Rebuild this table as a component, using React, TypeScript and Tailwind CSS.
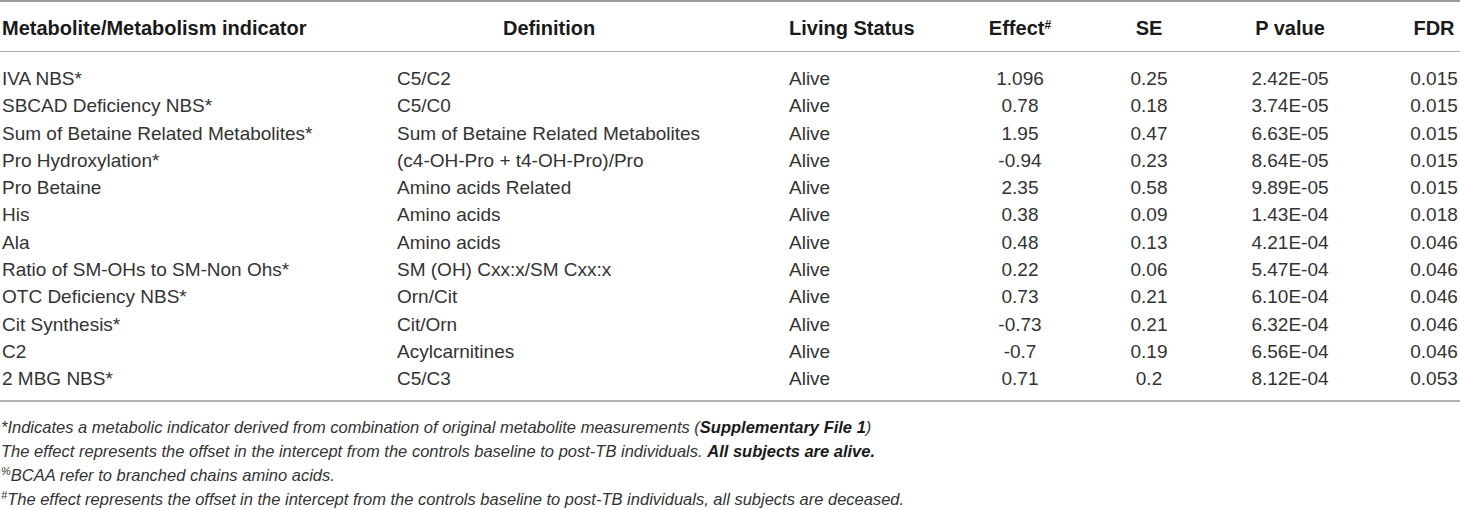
const rows = [
  ["IVA NBS*", "C5/C2", "Alive", "1.096", "0.25", "2.42E-05", "0.015"],
  ["SBCAD Deficiency NBS*", "C5/C0", "Alive", "0.78", "0.18", "3.74E-05", "0.015"],
  ["Sum of Betaine Related Metabolites*", "Sum of Betaine Related Metabolites", "Alive", "1.95", "0.47", "6.63E-05", "0.015"],
  ["Pro Hydroxylation*", "(c4-OH-Pro + t4-OH-Pro)/Pro", "Alive", "-0.94", "0.23", "8.64E-05", "0.015"],
  ["Pro Betaine", "Amino acids Related", "Alive", "2.35", "0.58", "9.89E-05", "0.015"],
  ["His", "Amino acids", "Alive", "0.38", "0.09", "1.43E-04", "0.018"],
  ["Ala", "Amino acids", "Alive", "0.48", "0.13", "4.21E-04", "0.046"],
  ["Ratio of SM-OHs to SM-Non Ohs*", "SM (OH) Cxx:x/SM Cxx:x", "Alive", "0.22", "0.06", "5.47E-04", "0.046"],
  ["OTC Deficiency NBS*", "Orn/Cit", "Alive", "0.73", "0.21", "6.10E-04", "0.046"],
  ["Cit Synthesis*", "Cit/Orn", "Alive", "-0.73", "0.21", "6.32E-04", "0.046"],
  ["C2", "Acylcarnitines", "Alive", "-0.7", "0.19", "6.56E-04", "0.046"],
  ["2 MBG NBS*", "C5/C3", "Alive", "0.71", "0.2", "8.12E-04", "0.053"],
];

const cols = "grid grid-cols-[395px_392px_173px_120px_138px_144px_98px]";

export default function App() {
  return (
    <div className="w-[1460px] h-[510px] bg-white text-[#2a2a2a] font-['Liberation_Sans',Arial,sans-serif] overflow-hidden">
      <div className="border-t-2 border-[#9a9a9a]" />

      {/* header */}
      <div className={`${cols} h-[50px] pt-[3px] items-center font-bold text-[20px] text-[#1a1a1a] border-b border-[#b0b0b0]`}>
        <div className="pl-[2px]">Metabolite/Metabolism indicator</div>
        <div className="pl-[108px]">Definition</div>
        <div className="pl-[2px]">Living Status</div>
        <div className="text-center">
          Effect<sup className="text-[12px]">#</sup>
        </div>
        <div className="text-center">SE</div>
        <div className="text-center">P value</div>
        <div className="pl-[46px] text-center">FDR</div>
      </div>

      {/* body */}
      <div className="pt-[13px] pb-[7px] border-b-2 border-[#b0b0b0]">
        {rows.map((r) => (
          <div key={r[0]} className={`${cols} h-[27.3px] items-center text-[19px] text-[#333]`}>
            <div className="pl-[2px]">{r[0]}</div>
            <div className="pl-[2px]">{r[1]}</div>
            <div className="pl-[2px]">{r[2]}</div>
            <div className="text-center">{r[3]}</div>
            <div className="text-center">{r[4]}</div>
            <div className="text-center">{r[5]}</div>
            <div className="pl-[46px] text-center">{r[6]}</div>
          </div>
        ))}
      </div>

      {/* footnotes */}
      <div className="pt-[13px] pl-[1px] italic text-[16.5px] text-[#333] leading-[24px]">
        <p>
          *Indicates a metabolic indicator derived from combination of original metabolite measurements (
          <b className="text-[#1a1a1a]">Supplementary File 1</b>)
        </p>
        <p>
          The effect represents the offset in the intercept from the controls baseline to post-TB individuals.{" "}
          <b className="text-[#1a1a1a]">All subjects are alive.</b>
        </p>
        <p>
          <sup className="text-[11px]">%</sup>BCAA refer to branched chains amino acids.
        </p>
        <p>
          <sup className="text-[11px]">#</sup>The effect represents the offset in the intercept from the controls baseline to post-TB individuals, all subjects are deceased.
        </p>
      </div>
    </div>
  );
}
